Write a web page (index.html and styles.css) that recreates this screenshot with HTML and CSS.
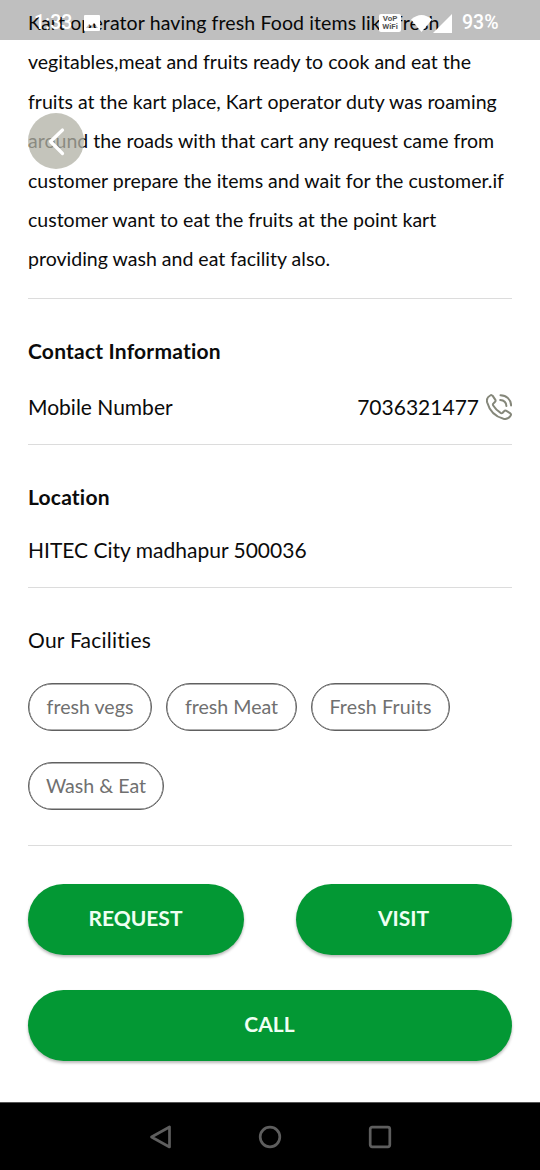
FILE: index.html
```html
<!DOCTYPE html>
<html lang="en">
<head>
<meta charset="utf-8">
<title>Kart details</title>
<link rel="stylesheet" href="styles.css">
</head>
<body>
<div class="screen">
  <header class="status">
    <span class="time">1:33</span>
    <svg class="picture" width="16" height="16" viewBox="0 0 16 16"><path fill="#fff" fill-rule="evenodd" d="M1 0h14a1 1 0 0 1 1 1v14a1 1 0 0 1-1 1H1a1 1 0 0 1-1-1V1a1 1 0 0 1 1-1zM2 13h12L10 8l-3 3-2-2z"/></svg>
    <span class="vowifi"><span>VoP</span><span>WiFi</span></span>
    <svg class="wifi" width="21" height="17" viewBox="0 0 21 17"><path fill="#fff" d="M0 4.500Q10.500-4.500 21 4.500L10.500 17z"/></svg>
    <svg class="signal" width="19" height="19" viewBox="0 0 19 19"><path fill="#fff" d="M19 0v19H0z"/></svg>
    <span class="battery">93%</span>
  </header>
  <button class="back" aria-label="Back"><svg width="56" height="56" viewBox="0 0 56 56"><path d="M34.500 17L22.500 28.500l12 12" fill="none" stroke="#fff" stroke-width="3.200" stroke-linecap="round" stroke-linejoin="round"/></svg></button>
  <main class="content">
    <p class="description"><span class="first-line">Kart operator having fresh Food items like fresh</span><br>vegitables,meat and fruits ready to cook and eat the<br>fruits at the kart place, Kart operator duty was roaming<br>around the roads with that cart any request came from<br>customer prepare the items and wait for the customer.if<br>customer want to eat the fruits at the point kart<br>providing wash and eat facility also.</p>
    <section class="contact">
      <h2>Contact Information</h2>
      <div class="row">
        <span>Mobile Number</span>
        <span class="phone">7036321477
          <svg width="26" height="26" viewBox="0 0 26 26" fill="none" stroke="#85877a" stroke-width="2" stroke-linecap="round" stroke-linejoin="round"><path d="M4.200 1.500C1.500 3 .4 5.600 1.100 8.300C3.500 16.700 9.300 22.700 17.500 24.800C20.600 25.500 23.200 24.200 24.700 21.500C25.200 20.600 24.900 19.700 24 19.100L20.500 16.900C19.600 16.300 18.700 16.500 18 17.300L16.700 18.700C16 19.300 15.100 19.300 14.300 18.700C11.300 16.700 9 14.400 7.200 11.500C6.700 10.700 6.900 9.800 7.600 9.200L8.900 8C9.700 7.300 9.800 6.500 9.200 5.600L6.700 1.900C6.100 1 5.100.9 4.200 1.500z"/><path d="M14.500 1.200C20.500 1.300 24.900 5.500 25.100 11.400M14.200 6C18.200 6.200 20.200 8.200 20.400 12"/></svg>
        </span>
      </div>
    </section>
    <section class="location">
      <h2>Location</h2>
      <p>HITEC City madhapur 500036</p>
    </section>
    <section class="facilities">
      <p>Our Facilities</p>
      <div class="chips">
        <span class="chip vegs">fresh vegs</span>
        <span class="chip meat">fresh Meat</span>
        <span class="chip fruits">Fresh Fruits</span>
        <span class="chip wash">Wash &amp; Eat</span>
      </div>
    </section>
    <div class="actions">
      <button>REQUEST</button>
      <button>VISIT</button>
      <button class="call">CALL</button>
    </div>
  </main>
  <nav class="navbar">
    <svg width="24" height="24" viewBox="0 0 24 24"><path d="M3.500 12L21.500 2v20z"/></svg>
    <svg width="24" height="24" viewBox="0 0 24 24"><circle cx="12" cy="12" r="9.800"/></svg>
    <svg width="24" height="24" viewBox="0 0 24 24"><rect x="2.200" y="2.200" width="19.600" height="19.600" rx="2"/></svg>
  </nav>
</div>
</body>
</html>
```
FILE: styles.css
```css
* { box-sizing: border-box; }
body { margin: 0; background: #fff; font-family: Lato, sans-serif; color: #0b0b0b; font-variant-ligatures: none; }
p, h2 { margin: 0; }
button { border: 0; padding: 0; font-family: inherit; }
.screen { position: relative; width: 540px; height: 1170px; overflow: hidden; display: flex; flex-direction: column; }
.status { position: absolute; z-index: 2; inset: 0 0 auto 0; height: 40px; background: rgba(0, 0, 0, .25); display: flex; align-items: center; padding: 6px 0 0 34px; color: #fff; }
.time, .battery { font: 500 19.5px/24px Roboto, sans-serif; }
.time { width: 50px; }
.vowifi { width: 22px; height: 18px; margin-left: 279px; border-radius: 2px; background: #fff; color: #555; display: flex; flex-direction: column; align-items: center; font: 700 8px/8px Roboto, sans-serif; padding-top: 1px; }
.wifi { margin-left: 10px; }
.signal { margin-left: 1px; }
.battery { margin-left: 10px; }
.back { position: absolute; z-index: 1; left: 28px; top: 112.5px; width: 56px; height: 56px; border-radius: 50%; background: rgba(177, 177, 166, .76); }
.back svg { display: block; }
.content { flex: 1; padding: 3px 28px 0; }
.description { height: 296px; border-bottom: 1px solid #dcdcdc; font-size: 19.55px; line-height: 39.4px; white-space: nowrap; }
.first-line { letter-spacing: .1px; }
.contact, .location, .facilities { border-bottom: 1px solid #dcdcdc; font-size: 21px; line-height: 30px; }
h2 { font-size: 21px; font-weight: 700; line-height: 30px; letter-spacing: .2px; }
.contact { height: 146px; padding-top: 37px; }
.row { display: flex; justify-content: space-between; align-items: center; margin-top: 26px; }
.phone { display: flex; align-items: center; gap: 7px; }
.phone svg { margin-top: -1px; }
.location { height: 143px; padding-top: 37px; }
.location p { margin-top: 23px; }
.facilities { height: 258px; padding-top: 37px; }
.facilities p { letter-spacing: .25px; }
.chips { display: flex; flex-wrap: wrap; gap: 31px 14px; margin-top: 28px; }
.chip { height: 48px; border: 1px solid #606060; box-shadow: inset 0 0 0 .4px #606060; border-radius: 24px; display: flex; align-items: center; justify-content: center; font-size: 19.6px; color: #707070; }
.vegs { width: 124px; }
.meat { width: 131px; }
.fruits { width: 139px; letter-spacing: .15px; }
.wash { width: 136px; }
.actions { display: grid; grid-template-columns: 216px 216px; column-gap: 52px; row-gap: 35px; padding-top: 38px; }
.actions button { height: 71px; border-radius: 36px; background: #039834; color: #effff3; font-size: 21px; font-weight: 700; box-shadow: 0 2px 3px rgba(0, 0, 0, .28); padding: 0 1px 4px 0; }
.actions .call { grid-column: 1 / 3; }
.navbar { height: 68px; background: #000; border-top: 1px solid #555; display: flex; justify-content: center; align-items: center; gap: 86px; }
.navbar svg { fill: none; stroke: #5e5e5e; stroke-width: 2.7; stroke-linejoin: round; }
```
